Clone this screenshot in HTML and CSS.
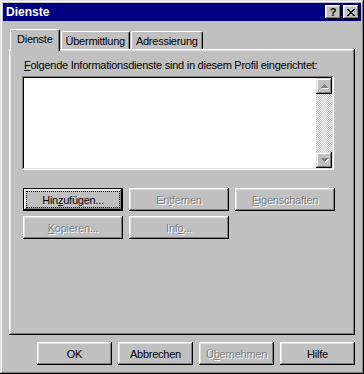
FILE: index.html
```html
<!DOCTYPE html>
<html lang="de">
<head>
    <meta charset="UTF-8">
    <meta name="viewport" content="width=device-width, initial-scale=1.0">
    <title>Dienste</title>
    <link rel="stylesheet" href="styles.css">
</head>
<body>
    <div class="window">
        <!-- Titelleiste -->
        <div class="titlebar">
            <span class="title">Dienste</span>
            <div class="title-buttons">
                <span class="tbtn help">?</span>
                <span class="tbtn close">
                    <svg width="8" height="7" viewBox="0 0 8 7">
                        <path d="M0 0h2v1h1v1h2V1h1V0h2v1H7v1H6v1H5v1h1v1h1v1h1v1H6V6H5V5H3v1H2v1H0V6h1V5h1V4h1V3H2V2H1V1H0z" fill="#000"/>
                    </svg>
                </span>
            </div>
        </div>

        <div class="content">
            <!-- Registerkarten -->
            <div class="tabs">
                <div class="tab active">Dienste</div>
                <div class="tab">Übermittlung</div>
                <div class="tab">Adressierung</div>
            </div>

            <div class="panel">
                <div class="label"><u>F</u>olgende Informationsdienste sind in diesem Profil eingerichtet:</div>

                <div class="listbox">
                    <div class="list-area"></div>
                    <div class="scrollbar">
                        <div class="sbtn">
                            <svg width="7" height="4" viewBox="0 0 7 4"><path d="M3 0h1v1h1v1h1v1h1v1H0V3h1V2h1V1h1z" fill="#808080"/></svg>
                        </div>
                        <div class="track"></div>
                        <div class="sbtn">
                            <svg width="7" height="4" viewBox="0 0 7 4"><path d="M0 0h7v1H6v1H5v1H4v1H3V3H2V2H1V1H0z" fill="#808080"/></svg>
                        </div>
                    </div>
                </div>

                <div class="actions">
                    <button class="btn default"><span class="focus">Hin<u>z</u>ufügen...</span></button>
                    <button class="btn disabled">En<u>t</u>fernen</button>
                    <button class="btn disabled"><u>E</u>igenschaften</button>
                    <button class="btn disabled"><u>K</u>opieren...</button>
                    <button class="btn disabled">Inf<u>o</u>...</button>
                </div>
            </div>

            <!-- Untere Schaltflächen -->
            <div class="footer">
                <button class="btn small">OK</button>
                <button class="btn small">Abbrechen</button>
                <button class="btn small disabled">Ü<u>b</u>ernehmen</button>
                <button class="btn small">Hilfe</button>
            </div>
        </div>
    </div>
</body>
</html>
```

FILE: styles.css
```css
body {
    margin: 0;
    font-family: 'Liberation Sans', Arial, sans-serif;
    font-size: 11px;
    letter-spacing: -0.25px;
    color: #000;
    background-color: #c0c0c0;
}

.window {
    width: 364px;
    height: 374px;
    box-sizing: border-box;
    padding: 3px;
    background-color: #c0c0c0;
    box-shadow: inset -1px -1px #000, inset 1px 1px #dfdfdf,
                inset -2px -2px #808080, inset 2px 2px #fff;
}

.titlebar {
    height: 18px;
    background-color: #000080;
    color: #fff;
    display: flex;
    align-items: center;
    justify-content: space-between;
    padding: 0 2px 0 3px;
}

.title {
    font-weight: bold;
    font-size: 12px;
    letter-spacing: 0;
}

.title-buttons {
    display: flex;
    gap: 1px;
}

.tbtn {
    width: 16px;
    height: 14px;
    box-sizing: border-box;
    background-color: #c0c0c0;
    color: #000;
    display: flex;
    align-items: center;
    justify-content: center;
    font-weight: bold;
    font-size: 11px;
    box-shadow: inset -1px -1px #000, inset 1px 1px #fff,
                inset -2px -2px #808080, inset 2px 2px #dfdfdf;
}

.tbtn.close {
    margin-left: 1px;
}

.content {
    padding: 8px 6px 0 6px;
}

.tabs {
    display: flex;
    align-items: flex-end;
    margin-left: 1px;
    margin-bottom: -2px;
    position: relative;
    z-index: 1;
}

.tab {
    height: 18px;
    box-sizing: border-box;
    padding: 3px 4px 0 4px;
    margin-bottom: 2px;
    margin-right: 1px;
    background-color: #c0c0c0;
    border-top: 1px solid #fff;
    border-left: 1px solid #fff;
    border-right: 1px solid #000;
    border-radius: 2px 2px 0 0;
    box-shadow: inset -1px 0 #808080;
}

.tab.active {
    height: 22px;
    margin-bottom: 0;
    padding: 3px 6px 0 6px;
}

.panel {
    height: 286px;
    box-sizing: border-box;
    padding: 10px 0 0 13px;
    box-shadow: inset -1px -1px #000, inset 1px 1px #fff,
                inset -2px -2px #808080, inset 2px 2px #dfdfdf;
}

.label {
    height: 13px;
    line-height: 13px;
    padding-left: 2px;
    margin-bottom: 4px;
}

.listbox {
    width: 312px;
    height: 94px;
    box-sizing: border-box;
    padding: 2px;
    display: flex;
    background-color: #fff;
    box-shadow: inset -1px -1px #fff, inset 1px 1px #808080,
                inset -2px -2px #dfdfdf, inset 2px 2px #000;
}

.list-area {
    flex: 1;
}

.scrollbar {
    width: 16px;
    display: flex;
    flex-direction: column;
}

.sbtn {
    height: 16px;
    box-sizing: border-box;
    background-color: #c0c0c0;
    display: flex;
    align-items: center;
    justify-content: center;
    box-shadow: inset -1px -1px #000, inset 1px 1px #dfdfdf,
                inset -2px -2px #808080, inset 2px 2px #fff;
}

.sbtn svg {
    filter: drop-shadow(1px 1px 0 #fff);
}

.track {
    flex: 1;
    background: repeating-conic-gradient(#c0c0c0 0 25%, #fff 0 50%) 0 0 / 2px 2px;
}

.actions {
    display: grid;
    grid-template-columns: repeat(3, 100px);
    column-gap: 6px;
    row-gap: 5px;
    margin-top: 18px;
    margin-left: 1px;
}

.btn {
    height: 23px;
    box-sizing: border-box;
    border: none;
    padding: 0;
    font-family: inherit;
    font-size: 11px;
    letter-spacing: -0.25px;
    color: #000;
    background-color: #c0c0c0;
    box-shadow: inset -1px -1px #000, inset 1px 1px #fff,
                inset -2px -2px #808080, inset 2px 2px #dfdfdf;
}

.btn.default {
    box-shadow: inset 0 0 0 1px #000, inset -2px -2px #000, inset 2px 2px #fff,
                inset -3px -3px #808080, inset 3px 3px #dfdfdf;
}

.btn .focus {
    display: flex;
    align-items: center;
    justify-content: center;
    height: 15px;
    margin: 0 4px;
    outline: 1px dotted #000;
}

.btn.disabled {
    color: #808080;
    text-shadow: 1px 1px 0 #fff;
}

.footer {
    display: flex;
    justify-content: flex-end;
    gap: 6px;
    margin-top: 7px;
}

.btn.small {
    width: 75px;
}
```
